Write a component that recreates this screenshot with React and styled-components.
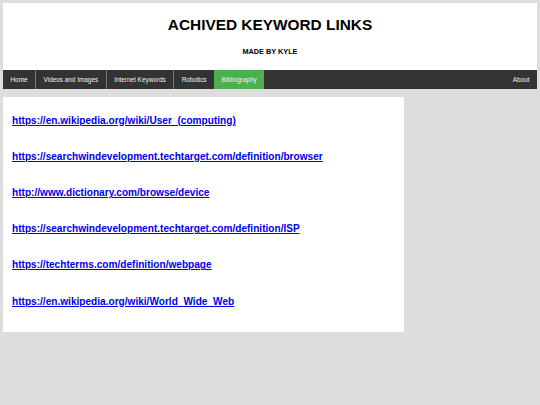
import React from "react";
import styled, { createGlobalStyle } from "styled-components";

const Global = createGlobalStyle`
  html, body { margin: 0; padding: 0; }
  body {
    background: #dddddd;
    font-family: "Liberation Sans", Arial, sans-serif;
    padding: 3px;
  }
`;

const Header = styled.header`
  background: #ffffff;
  height: 67px;
  display: flex;
  flex-direction: column;
  align-items: center;
`;

const Title = styled.h1`
  margin: 12px 0 0;
  font-size: 15.4px;
  font-weight: bold;
  color: #000;
  line-height: 20px;
`;

const Sub = styled.h5`
  margin: 12px 0 0;
  font-size: 7.3px;
  font-weight: bold;
  color: #000;
  line-height: 10px;
`;

const Nav = styled.nav`
  background: #333333;
  height: 19px;
  display: flex;
  align-items: stretch;
`;

const NavItem = styled.a`
  display: flex;
  align-items: center;
  padding: 0 7.5px;
  font-size: 6.4px;
  color: #f2f2f2;
  text-decoration: none;
  background: ${(p) => (p.$active ? "#4CAF50" : "transparent")};
  border-right: ${(p) => (p.$sep ? "1px solid #777" : "none")};
  margin-left: ${(p) => (p.$right ? "auto" : "0")};
`;

const Row = styled.div`
  display: flex;
  margin-top: 8px;
`;

const Card = styled.main`
  background: #ffffff;
  width: 75%;
  padding: 5px 9px 13px;
  box-sizing: border-box;
`;

const Item = styled.div`
  height: 36.2px;
  display: flex;
  align-items: center;
`;

const Link = styled.a`
  font-size: 10.1px;
  font-weight: bold;
  color: #0000ee;
  text-decoration: underline;
`;

const links = [
  "https://en.wikipedia.org/wiki/User_(computing)",
  "https://searchwindevelopment.techtarget.com/definition/browser",
  "http://www.dictionary.com/browse/device",
  "https://searchwindevelopment.techtarget.com/definition/ISP",
  "https://techterms.com/definition/webpage",
  "https://en.wikipedia.org/wiki/World_Wide_Web",
];

export default function App() {
  return (
    <>
      <Global />
      <Header>
        <Title>ACHIVED KEYWORD LINKS</Title>
        <Sub>MADE BY KYLE</Sub>
      </Header>
      <Nav>
        <NavItem $sep>Home</NavItem>
        <NavItem $sep>Videos and Images</NavItem>
        <NavItem $sep>Internet Keywords</NavItem>
        <NavItem>Robotics</NavItem>
        <NavItem $active>Bibliography</NavItem>
        <NavItem $right>About</NavItem>
      </Nav>
      <Row>
        <Card>
          {links.map((l) => (
            <Item key={l}>
              <Link href="#">{l}</Link>
            </Item>
          ))}
        </Card>
      </Row>
    </>
  );
}
